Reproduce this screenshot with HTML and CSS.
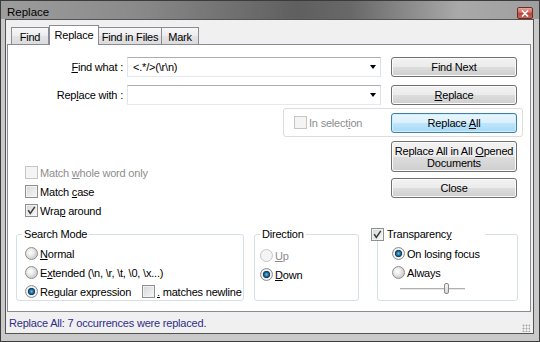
FILE: index.html
```html
<!DOCTYPE html>
<html>
<head>
<meta charset="utf-8">
<title>Replace</title>
<link rel="stylesheet" href="styles.css">
</head>
<body>
<div class="window">
  <div class="titlebar">
    <span class="title">Replace</span>
    <span class="close"><svg width="8" height="7" viewBox="0 0 8 7"><path d="M1 0.5 L7 6.5 M7 0.5 L1 6.5" stroke="#fff" stroke-width="1.6"/></svg></span>
  </div>
  <div class="client">
    <div class="tabs">
      <div class="tab t-find">Find</div>
      <div class="tab t-replace sel">Replace</div>
      <div class="tab t-files">Find in Files</div>
      <div class="tab t-mark">Mark</div>
    </div>
    <div class="panel">
      <div class="fields">
        <span class="lbl"><u>F</u>ind what :</span>
        <div class="combo"><span class="val">&lt;.*/&gt;(\r\n)</span><span class="arrow"></span></div>
        <button class="btn">Find Next</button>
        <span class="lbl">Rep<u>l</u>ace with :</span>
        <div class="combo"><span class="val"></span><span class="arrow"></span></div>
        <button class="btn"><u>R</u>eplace</button>
      </div>
      <div class="selrow">
        <div class="selbox">
          <span class="item dis"><span class="cb"></span><span>In select<u>i</u>on</span></span>
          <button class="btn def">Replace <u>A</u>ll</button>
        </div>
      </div>
      <div class="mid">
        <div class="opts">
          <span class="item dis"><span class="cb"></span><span>Match <u>w</u>hole word only</span></span>
          <span class="item"><span class="cb"></span><span>Match <u>c</u>ase</span></span>
          <span class="item"><span class="cb"><svg width="11" height="11" viewBox="0 0 11 11"><path d="M2.2 5.2 L4.3 8.4 L8.8 1.8" fill="none" stroke="#3a3a3a" stroke-width="1.5"/></svg></span><span>Wra<u>p</u> around</span></span>
        </div>
        <div class="btncol">
          <button class="btn tall">Replace All in All <u>O</u>pened<br>Documents</button>
          <button class="btn">Close</button>
        </div>
      </div>
      <div class="groups">
        <div class="group g-mode">
          <span class="gtitle">Search Mode</span>
          <div class="glist">
            <span class="item"><span class="rb"></span><span><u>N</u>ormal</span></span>
            <span class="item"><span class="rb"></span><span>E<u>x</u>tended (\n, \r, \t, \0, \x...)</span></span>
            <span class="item"><span class="rb on"></span><span class="rx">Regular expression</span><span class="cb"></span><span><u>.</u> matches newline</span></span>
          </div>
        </div>
        <div class="group g-dir">
          <span class="gtitle">Direction</span>
          <div class="glist">
            <span class="item dis"><span class="rb"></span><span><u>U</u>p</span></span>
            <span class="item"><span class="rb on"></span><span><u>D</u>own</span></span>
          </div>
        </div>
        <div class="group g-trans">
          <span class="gtitle gcheck"><span class="cb"><svg width="11" height="11" viewBox="0 0 11 11"><path d="M2.2 5.2 L4.3 8.4 L8.8 1.8" fill="none" stroke="#3a3a3a" stroke-width="1.5"/></svg></span><span>Transparenc<u>y</u></span></span>
          <div class="glist">
            <span class="item"><span class="rb on"></span><span>On losing focus</span></span>
            <span class="item"><span class="rb"></span><span>Always</span></span>
            <div class="slider"><span class="track left"></span><span class="thumb"></span><span class="track right"></span></div>
          </div>
        </div>
      </div>
    </div>
    <div class="status">
      <span>Replace All: 7 occurrences were replaced.</span>
      <span class="grip"></span>
    </div>
  </div>
</div>
</body>
</html>
```

FILE: styles.css
```css
html, body {
  margin: 0;
  padding: 0;
}
body {
  width: 540px;
  height: 342px;
  overflow: hidden;
  font-family: "Liberation Sans", Arial, sans-serif;
  font-size: 11px;
  letter-spacing: -0.2px;
  color: #000;
  background: #3b3b3b;
}
.window {
  width: 540px;
  height: 342px;
  box-sizing: border-box;
  border: 1px solid #3b3b3b;
  padding: 0 5px 7px 4px;
  display: flex;
  flex-direction: column;
  background:
    linear-gradient(to bottom, rgba(0,0,0,0) 18px, #c9c9c9 18px),
    linear-gradient(to right, #9d9d9d 0%, #8a8a8a 25%, #5f5f5f 55%, #686868 65%, #a9a9a9 85%, #9e9e9e 100%);
}
.titlebar {
  height: 18px;
  flex: none;
  display: flex;
  align-items: flex-end;
  justify-content: space-between;
}
.title {
  align-self: center;
  padding: 3px 0 0 2px;
  font-size: 11.5px;
  letter-spacing: 0;
  color: #000;
}
.close {
  width: 16px;
  height: 12px;
  box-sizing: border-box;
  margin-right: 1px;
  border: 1px solid #6e2b24;
  border-radius: 2px;
  background: linear-gradient(#e6a99f, #cc6156 50%, #b8443a 51%, #c8675a);
  display: flex;
  align-items: center;
  justify-content: center;
}
.close svg { display: block; }

.client {
  flex: 1;
  background: #f0f0f0;
  border: 1px solid #535353;
  display: flex;
  flex-direction: column;
  padding: 5px 2px 0 1px;
}
.tabs {
  height: 19px;
  flex: none;
  display: flex;
  align-items: flex-end;
  padding-left: 4px;
}
.tab {
  height: 17px;
  box-sizing: border-box;
  border: 1px solid #898c95;
  border-bottom: none;
  background: linear-gradient(#f7f7f7, #ececec 50%, #e3e3e3 51%, #dcdcdc);
  display: flex;
  align-items: center;
  justify-content: center;
  padding-top: 1px;
  white-space: nowrap;
}
.t-find { width: 38px; }
.t-replace { width: 50px; }
.t-files { width: 64px; margin-left: -1px; }
.t-mark { width: 38px; margin-left: -1px; }
.tab.sel {
  height: 20px;
  margin-bottom: -1px;
  background: #fff;
  position: relative;
  z-index: 2;
  padding-top: 0;
  padding-bottom: 2px;
}
.panel {
  height: 268px;
  flex: none;
  box-sizing: border-box;
  border: 1px solid #898c95;
  background: #fff;
  display: flex;
  flex-direction: column;
}
.fields {
  margin-top: 12px;
  display: grid;
  grid-template-columns: 119px 254px 136px;
  grid-auto-rows: 20px;
  row-gap: 8px;
  align-items: center;
}
.lbl {
  text-align: right;
  padding-right: 4px;
}
.combo {
  height: 20px;
  box-sizing: border-box;
  border: 1px solid;
  border-color: #abadb3 #dbdfe6 #e3e9ef #e2e3ea;
  display: flex;
  align-items: center;
  justify-content: space-between;
  padding: 0 4px 0 5px;
}
.arrow {
  width: 0;
  height: 0;
  border-top: 4px solid #000;
  border-left: 3.5px solid transparent;
  border-right: 3.5px solid transparent;
}
.btn {
  width: 126px;
  height: 20px;
  box-sizing: border-box;
  padding: 0;
  margin: 0;
  font: inherit;
  letter-spacing: -0.2px;
  color: #000;
  border: 1px solid #707070;
  border-radius: 3px;
  background: linear-gradient(#f2f2f2 0%, #ebebeb 50%, #dddddd 51%, #cfcfcf 100%);
  box-shadow: inset 0 0 0 1px #fbfbfb;
  justify-self: end;
}
.btn.def {
  border-color: #3c7fb1;
  background: linear-gradient(#eaf6fd 0%, #d9f0fc 50%, #bee6fd 51%, #a7d9f5 100%);
  box-shadow: inset 0 0 0 1px #d0eefb;
}
.btn.tall {
  height: 31px;
  line-height: 12px;
}
.selrow {
  margin-top: 3px;
  display: flex;
}
.selbox {
  margin-left: 275px;
  width: 240px;
  height: 29px;
  box-sizing: border-box;
  border: 1px solid #dcdcdc;
  border-radius: 3px;
  display: flex;
  align-items: center;
  justify-content: space-between;
  padding: 0 5px 0 10px;
}
.item {
  display: flex;
  align-items: center;
  gap: 2px;
  height: 19px;
  white-space: nowrap;
}
.item.dis { color: #8d8d8d; }
.cb {
  width: 13px;
  height: 13px;
  box-sizing: border-box;
  flex: none;
  border: 1px solid #8e8f8f;
  background: linear-gradient(135deg, #d4d7db, #f7f7f7);
  box-shadow: inset 0 0 0 1px #f2f2f2;
  display: flex;
  align-items: center;
  justify-content: center;
}
.cb svg { display: block; }
.dis .cb {
  border-color: #c5c5c5;
  background: #f4f4f4;
  box-shadow: none;
}
.rb {
  width: 13px;
  height: 13px;
  box-sizing: border-box;
  flex: none;
  border-radius: 50%;
  border: 1px solid #8e8f8f;
  background: radial-gradient(circle at 40% 40%, #ffffff 0, #eeeeee 3px, #d2d2d2 6px);
}
.rb.on {
  background: radial-gradient(circle at 50% 50%, #67c2e8 0, #2a7db0 1.6px, #154a6e 2.8px, #1b3f5c 3.4px, #e9e9e9 3.9px, #f6f6f6 4.6px, #d6d6d6 6px);
}
.dis .rb {
  border-color: #c5c5c5;
  background: #f4f4f4;
}
.mid {
  width: 509px;
  display: flex;
  justify-content: space-between;
}
.opts {
  margin-left: 17px;
  padding-top: 26px;
  display: flex;
  flex-direction: column;
}
.btncol {
  margin-top: 4px;
  display: flex;
  flex-direction: column;
  gap: 6px;
}
.groups {
  margin-top: 14px;
  margin-left: 8px;
  display: flex;
}
.group {
  height: 67px;
  box-sizing: border-box;
  border: 1px solid #d5dfe5;
  border-radius: 3px;
  display: flex;
  flex-direction: column;
}
.g-mode { width: 228px; }
.g-dir { width: 105px; margin-left: 10px; }
.g-trans { width: 141px; margin-left: 18px; }
.gtitle {
  align-self: flex-start;
  background: #fff;
  line-height: 13px;
  height: 13px;
  margin-top: -7px;
  padding: 0 2px;
}
.g-mode .gtitle { margin-left: 5px; }
.g-dir .gtitle { margin-left: 5px; }
.gcheck {
  display: flex;
  align-items: center;
  gap: 3px;
  width: 114px;
  box-sizing: border-box;
  margin-left: -7px;
  padding: 0;
}
.glist {
  display: flex;
  flex-direction: column;
}
.g-mode .glist { padding: 3px 0 0 8px; }
.g-dir .glist { padding: 5px 0 0 5px; }
.g-trans .glist { padding: 3px 0 0 14px; }
.rx { width: 100px; }
.slider {
  margin-left: 8px;
  width: 65px;
  height: 13px;
  display: flex;
  align-items: center;
}
.track {
  height: 2px;
  box-sizing: border-box;
  border-top: 1px solid #b0b0b0;
  border-bottom: 1px solid #e8e8e8;
}
.track.left { width: 44px; }
.track.right { flex: 1; }
.thumb {
  width: 5px;
  height: 11px;
  box-sizing: border-box;
  border: 1px solid #8a8a8a;
  border-radius: 2px;
  background: linear-gradient(#f4f4f4, #d8d8d8);
}
.status {
  flex: 1;
  display: flex;
  align-items: center;
  padding-left: 2px;
  color: #2f2c88;
}
.grip {
  align-self: flex-end;
  width: 8px;
  height: 8px;
  margin: 0 1px 1px auto;
  background: radial-gradient(circle, #a8a8a8 0.8px, transparent 1.2px) 0 0 / 3px 3px;
}
```
